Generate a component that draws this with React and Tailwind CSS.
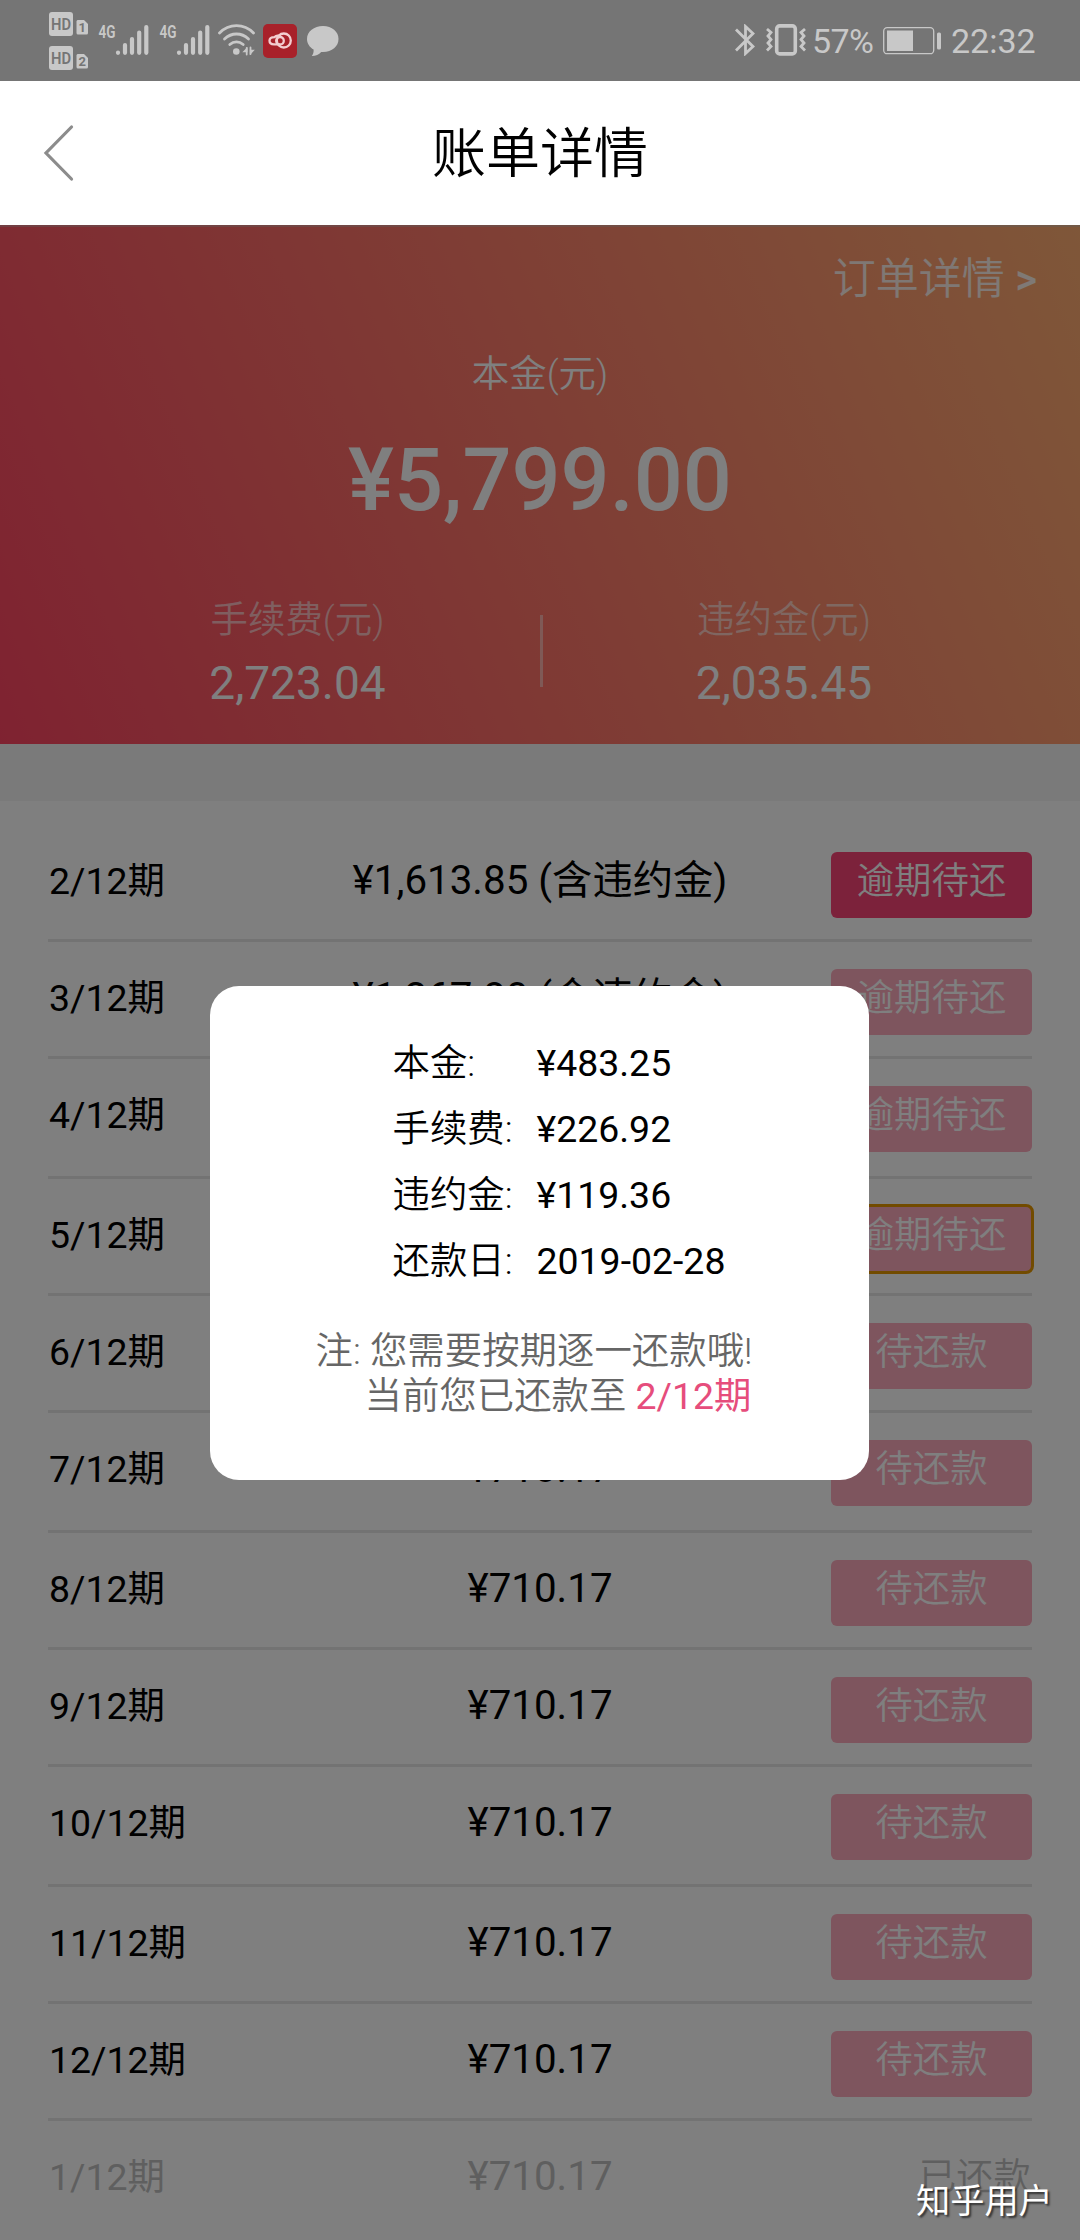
const plans = [
  { term: '2/12期', amount: '¥1,613.85 (含违约金)', status: 'current', label: '逾期待还' },
  { term: '3/12期', amount: '¥1,267.80 (含违约金)', status: 'pending', label: '逾期待还' },
  { term: '4/12期', amount: '¥1,036.45 (含违约金)', status: 'pending', label: '逾期待还' },
  { term: '5/12期', amount: '¥829.53 (含违约金)', status: 'pending', label: '逾期待还', focused: true },
  { term: '6/12期', amount: '¥710.17', status: 'pending', label: '待还款' },
  { term: '7/12期', amount: '¥710.17', status: 'pending', label: '待还款' },
  { term: '8/12期', amount: '¥710.17', status: 'pending', label: '待还款' },
  { term: '9/12期', amount: '¥710.17', status: 'pending', label: '待还款' },
  { term: '10/12期', amount: '¥710.17', status: 'pending', label: '待还款' },
  { term: '11/12期', amount: '¥710.17', status: 'pending', label: '待还款' },
  { term: '12/12期', amount: '¥710.17', status: 'pending', label: '待还款' },
  { term: '1/12期', amount: '¥710.17', status: 'paid', label: '已还款' }
]

const details = [
  { name: '本金:', value: '¥483.25' },
  { name: '手续费:', value: '¥226.92' },
  { name: '违约金:', value: '¥119.36' },
  { name: '还款日:', value: '2019-02-28' }
]

export default function App() {
  return (
    <div className="relative flex h-[2240px] w-[1080px] flex-col overflow-hidden bg-white font-['Roboto','Noto_Sans_CJK_SC',sans-serif] text-black">
      <StatusBar />
      <NavBar />
      <main className="relative min-h-0 flex-1 overflow-hidden">
        <Summary />
        <div className="h-[57px] bg-[#f5f5f5]" />
        <div className="px-12 pt-6">
          {plans.map((plan, index) => (
            <PlanRow
              key={plan.term}
              plan={plan}
              tall={index % 3 === 2}
              last={index === plans.length - 1}
            />
          ))}
        </div>
        <div className="absolute inset-0 flex items-center justify-center bg-black/50 pr-[2px]">
          <DetailDialog />
        </div>
      </main>
      <span className="absolute top-[2176px] left-[916px] text-[34.2px] leading-[50px] text-white [text-shadow:2px_2px_2px_rgba(0,0,0,0.6)]">
        知乎用户
      </span>
    </div>
  )
}

function StatusBar() {
  return (
    <div className="flex h-[81px] shrink-0 items-start bg-[#757575] text-[#c8c8c8]">
      <div className="mt-3 ml-[49px] flex flex-col gap-[10px]">
        <HdBadge sim="1" />
        <HdBadge sim="2" />
      </div>
      <SignalIcon className="mt-5 ml-[10px]" />
      <SignalIcon className="mt-5 ml-[10px]" />
      <WifiIcon />
      <CloudAppIcon />
      <BubbleIcon />
      <div className="mr-[45px] ml-auto flex items-start">
        <BluetoothIcon />
        <VibrateIcon />
        <span className="mt-[17px] ml-[6px] w-[62px] text-[34px] leading-[48px] tracking-[-0.6px]">
          57%
        </span>
        <BatteryIcon />
        <span className="mt-[17px] ml-[9px] w-[84px] text-[34px] leading-[48px] whitespace-nowrap">
          22:32
        </span>
      </div>
    </div>
  )
}

function HdBadge({ sim }) {
  return (
    <svg width="39" height="24" viewBox="0 0 39 24">
      <rect width="24" height="24" rx="3" fill="#c8c8c8" />
      <text x="2" y="17.5" textLength="20" lengthAdjust="spacingAndGlyphs" fontSize="16" fontWeight="600" fill="#757575">
        HD
      </text>
      <path d="M28.5 8H35l4 4v9a1.5 1.5 0 0 1-1.5 1.5H29A1.5 1.5 0 0 1 27.5 21V9z" fill="#c8c8c8" />
      <text x="33.2" y="20" textAnchor="middle" fontSize="13" fontWeight="700" fill="#757575">
        {sim}
      </text>
    </svg>
  )
}

function SignalIcon({ className }) {
  return (
    <svg width="51" height="36" viewBox="0 -4 51 36" className={className}>
      <text x="0.5" y="14.3" textLength="17" lengthAdjust="spacingAndGlyphs" fontSize="18.5" fontWeight="600" fill="currentColor">
        4G
      </text>
      <path
        d="M20 28.5v0.3M27 21v7.8M34 15v13.8M41.2 8.5v20.3M48.3 3v25.8"
        stroke="currentColor"
        strokeWidth="4.2"
        strokeLinecap="round"
      />
    </svg>
  )
}

function WifiIcon() {
  return (
    <svg width="38" height="32" viewBox="0 0 38 32" className="mt-6 ml-[8px]" fill="none" stroke="currentColor" strokeWidth="2.8" strokeLinecap="round">
      <path d="M1.5 9C11 -0.8 26 -0.8 35.5 9" />
      <path d="M6.5 15C13.5 8.3 23.5 8.3 30.5 15" />
      <path d="M11.8 20.5c4-3.6 9.4-3.6 13.4 0" />
      <circle cx="18.3" cy="27.5" r="3.3" fill="currentColor" stroke="none" />
      <path d="M24.3 28.3h5.2V23zM31.8 23.3v8l5-5.5h-5z" fill="currentColor" stroke="none" />
      <path d="M28.7 24v6.5M32.5 23.5v6.5" strokeWidth="1.8" />
    </svg>
  )
}

function CloudAppIcon() {
  return (
    <svg width="34" height="34" viewBox="0 0 34 34" className="mt-6 ml-[7px]">
      <rect width="34" height="34" rx="5" fill="#a8212a" />
      <g fill="none" stroke="#f3cdd0" strokeWidth="2.3">
        <circle cx="20.8" cy="16.5" r="7" />
        <circle cx="17" cy="16.8" r="3.8" />
        <path d="M17.5 12.6c-2-1.2-4.5-1-6 0.5-3 0-5 1.3-5 3.6s2 3.6 4.5 3.6h6.5" />
      </g>
    </svg>
  )
}

function BubbleIcon() {
  return (
    <svg width="32" height="31" viewBox="0 0 32 31" className="mt-[26px] ml-[10px]" fill="currentColor">
      <path d="M16 0C7 0 0 5.5 0 13c0 4.5 2.6 8.3 6.6 10.6 0.2 2.6-0.3 4.3-1.8 6.4 4 0 7.2-1.5 9.4-4.1H16c9 0 15.5-5.5 15.5-12.9S25 0 16 0z" />
    </svg>
  )
}

function BluetoothIcon() {
  return (
    <svg width="20" height="32" viewBox="0 0 20 32" className="mt-6" fill="none" stroke="currentColor" strokeWidth="2.8">
      <path d="M1 5.5 18 22.5 10.5 29.5V2.5L18 9.5 1 26.5" />
    </svg>
  )
}

function VibrateIcon() {
  return (
    <svg width="40" height="32" viewBox="0 0 40 32" className="mt-6 ml-[11px]" fill="none" stroke="currentColor">
      <rect x="10.7" y="1.9" width="18.6" height="28" rx="3" strokeWidth="3.6" />
      <path
        d="M1 5l4 3.5L2 12l3 3.5L2 19l3 3.5L1 26.5M39 5l-4 3.5 3 3.5-3 3.5 3 3.5-3 3.5 4 4"
        strokeWidth="2.8"
      />
    </svg>
  )
}

function BatteryIcon() {
  return (
    <svg width="59" height="28" viewBox="0 0 59 28" className="mt-[27px] ml-[9px]">
      <rect x="0.7" y="0.7" width="50" height="26" rx="3.5" fill="none" stroke="currentColor" strokeWidth="1.3" />
      <rect x="4" y="3.5" width="26" height="20.5" fill="currentColor" />
      <rect x="54" y="5.5" width="4" height="17" rx="1.5" fill="currentColor" />
    </svg>
  )
}

function NavBar() {
  return (
    <header className="grid h-36 shrink-0 grid-cols-[120px_1fr_120px] items-center bg-white">
      <button type="button" aria-label="返回" className="flex pl-[43px]">
        <svg width="32" height="58" viewBox="0 0 32 58" fill="none" stroke="#8c8c8c" strokeWidth="3.2" strokeLinecap="round">
          <path d="M28.5 3 3 29l25.5 26" />
        </svg>
      </button>
      <h1 className="pt-1 text-center text-[54px] leading-[72px] font-[350]">账单详情</h1>
    </header>
  )
}

function Summary() {
  return (
    <section className="h-[519px] border-t-2 border-[#bbbbbb]/40 bg-[linear-gradient(67deg,#ff4562_0%,#ffae72_100%)] bg-origin-border pt-[20px] text-white">
      <div className="pr-[43px] text-right text-[43px] leading-[64px] font-[350] text-white/85">
        订单详情 <span className="text-[42px] font-medium">&gt;</span>
      </div>
      <div className="mt-[36px] text-center text-[37.44px] leading-[52px] font-[350]">本金(元)</div>
      <div className="mt-[31px] text-center text-[86.4px] leading-[100px] font-medium">¥5,799.00</div>
      <div className="mt-[63px] grid grid-cols-[485px_3px_482px] pl-[55px] text-center">
        <Fee name="手续费(元)" value="2,723.04" />
        <div className="mt-[21px] h-[72px] bg-white/45" />
        <Fee name="违约金(元)" value="2,035.45" />
      </div>
    </section>
  )
}

function Fee({ name, value }) {
  return (
    <div>
      <div className="text-[37.44px] leading-[52px] font-[350] text-white/60">{name}</div>
      <div className="mt-[7px] text-[46px] leading-[60px]">{value}</div>
    </div>
  )
}

function PlanRow({ plan, tall, last }) {
  const paid = plan.status === 'paid'

  return (
    <div
      className={`grid grid-cols-[201px_1fr_201px] items-start pt-[27px] ${
        tall ? 'h-[120px]' : 'h-[117px]'
      } ${last ? '' : 'border-b-[3px] border-[#e6e6e6]'} ${paid ? 'text-[#bfbfbf]' : ''}`}
    >
      <span className="pl-px text-[37.44px] leading-[58px]">{plan.term}</span>
      <span className="text-center text-[40.32px] leading-[58px]">{plan.amount}</span>
      {paid ? (
        <span className="pr-px text-right text-[37.44px] leading-[58px] font-[350]">{plan.label}</span>
      ) : (
        <button
          type="button"
          className={`h-[66px] rounded-[6px] pb-2 text-[37.44px] leading-[58px] font-[350] text-white ${
            plan.status === 'current' ? 'bg-[#f84476]' : 'bg-[#fdaabc]'
          } ${plan.focused ? 'outline-[3px] -outline-offset-1 outline-[#e59700]' : ''}`}
        >
          {plan.label}
        </button>
      )}
    </div>
  )
}

function DetailDialog() {
  return (
    <div className="h-[494px] w-[659px] rounded-[29px] bg-white pt-[44px] text-[37.44px]">
      <dl className="grid grid-cols-[144px_1fr] pl-[183px] leading-[66px]">
        {details.map((item) => (
          <div key={item.name} className="contents">
            <dt className="font-[350]">{item.name}</dt>
            <dd>{item.value}</dd>
          </div>
        ))}
      </dl>
      <p className="mt-[35px] pl-[106px] leading-[45px] font-[350] text-[#666666]">
        注: 您需要按期逐一还款哦!
      </p>
      <p className="pl-[155px] leading-[45px] font-[350] text-[#666666]">
        当前您已还款至 <span className="font-normal text-[#e64d7c]">2/12期</span>
      </p>
    </div>
  )
}
